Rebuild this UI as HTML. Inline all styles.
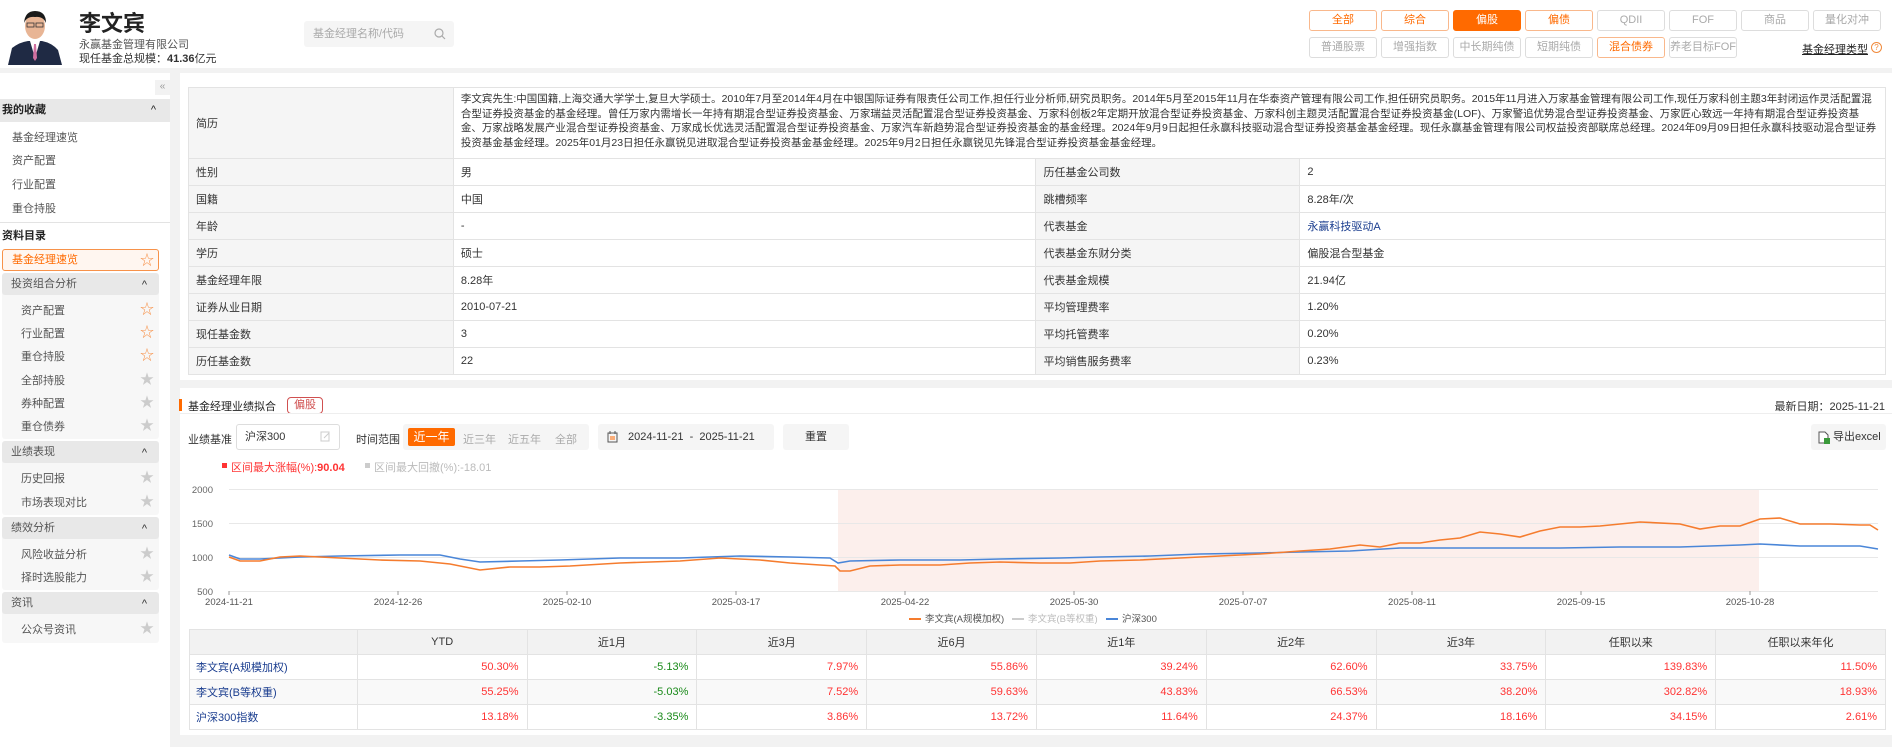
<!DOCTYPE html>
<html><head><meta charset="utf-8">
<style>
*{box-sizing:border-box;margin:0;padding:0}
body{width:1892px;height:747px;overflow:hidden;background:#fff;font-family:"Liberation Sans","Noto Sans CJK SC",sans-serif;color:#333;font-size:12px;position:relative}
.a{position:absolute;white-space:nowrap}
.btn{position:absolute;width:68px;height:21px;border:1px solid #ddd;border-radius:3px;color:#aaa;font-size:11px;text-align:center;line-height:19px;background:#fff;white-space:nowrap}
.btn.o{border-color:#f9b88c;color:#ff6a00}
.btn.f{background:#ff6a00;border-color:#ff6a00;color:#fff}
.sb-item{position:absolute;left:12px;font-size:11px;color:#555}
.sub{position:absolute;left:21px;font-size:11px;color:#555}
.star{position:absolute;left:140px;font-size:14px;color:#ccc;line-height:14px}
.star.o{color:#f7924a}
.gh{position:absolute;left:2px;width:157px;height:22px;background:#e8e8e8;border-radius:3px;font-size:11px;color:#555;line-height:22px;padding-left:9px}
.gh:after{content:"^";position:absolute;right:12px;top:1px;font-size:11px;color:#333}
.panel{position:absolute;left:2px;width:157px;background:#f7f7f7;border-radius:3px}
table{border-collapse:collapse;position:absolute}
td{border:1px solid #e3e3e3;font-size:11px;padding:0 7px}
.t1 td{height:27px}
.t1 td.l{background:#f5f5f5}
.t2 td{height:25px;text-align:right;padding-right:8px}
.t2 tr.h td{background:#f2f2f2;text-align:center;padding:0;color:#333}
.t2 td.n{text-align:left;color:#1a3d8f;padding-left:6px}
.r{color:#f33}.g{color:#1a8a1a}
</style></head><body>

<!-- header -->
<svg class="a" style="left:8px;top:8px" width="54" height="57" viewBox="0 0 54 57">
<rect width="54" height="57" fill="#fff"/>
<path d="M0 57 L4 40 Q12 34 20 33 L34 33 Q44 35 50 42 L54 57Z" fill="#1f2a44"/>
<path d="M22 33 L27 50 L32 33Z" fill="#fff"/>
<path d="M26 36 L28 36 L29 50 L27 53 L25 50Z" fill="#d070a0"/>
<ellipse cx="27" cy="18" rx="10" ry="13" fill="#e8b595"/>
<path d="M16 15 Q17 3 27 3 Q38 3 38 15 Q35 8 27 9 Q19 8 16 15Z" fill="#1a1a1a"/>
<rect x="19" y="15" width="7" height="4" fill="none" stroke="#333" stroke-width="0.8"/>
<rect x="28" y="15" width="7" height="4" fill="none" stroke="#333" stroke-width="0.8"/>
</svg>
<div class="a" style="left:79px;top:6px;font-size:22px;font-weight:bold;color:#222">李文宾</div>
<div class="a" style="left:79px;top:36px;font-size:11px;color:#555">永赢基金管理有限公司</div>
<div class="a" style="left:79px;top:50px;font-size:11px;color:#333">现任基金总规模：<b>41.36</b>亿元</div>
<div class="a" style="left:304px;top:21px;width:150px;height:26px;background:#f5f5f5;border-radius:3px;font-size:11px;color:#aaa;line-height:26px;padding-left:9px">基金经理名称/代码
<svg class="a" style="right:8px;top:7px" width="12" height="12"><circle cx="5" cy="5" r="4" fill="none" stroke="#aaa" stroke-width="1.2"/><path d="M8 8 L11 11" stroke="#aaa" stroke-width="1.2"/></svg></div>

<div class="btn o" style="left:1309px;top:10px">全部</div>
<div class="btn o" style="left:1381px;top:10px">综合</div>
<div class="btn f" style="left:1453px;top:10px">偏股</div>
<div class="btn o" style="left:1525px;top:10px">偏债</div>
<div class="btn" style="left:1597px;top:10px">QDII</div>
<div class="btn" style="left:1669px;top:10px">FOF</div>
<div class="btn" style="left:1741px;top:10px">商品</div>
<div class="btn" style="left:1813px;top:10px">量化对冲</div>
<div class="btn" style="left:1309px;top:37px">普通股票</div>
<div class="btn" style="left:1381px;top:37px">增强指数</div>
<div class="btn" style="left:1453px;top:37px">中长期纯债</div>
<div class="btn" style="left:1525px;top:37px">短期纯债</div>
<div class="btn o" style="left:1597px;top:37px">混合债券</div>
<div class="btn" style="left:1669px;top:37px">养老目标FOF</div>
<div class="a" style="left:1802px;top:41px;font-size:11px;color:#222;text-decoration:underline">基金经理类型</div>
<div class="a" style="left:1871px;top:42px;width:11px;height:11px;border:1px solid #f08a3c;border-radius:50%;font-size:8px;color:#f08a3c;text-align:center;line-height:9px">?</div>

<div class="a" style="left:0;top:68px;width:1892px;height:5px;background:#f2f2f2"></div>

<!-- sidebar -->
<div class="a" style="left:170px;top:73px;width:10px;height:674px;background:#f2f2f2"></div>
<div class="a" style="left:155px;top:80px;width:15px;height:15px;background:#f2f2f2;font-size:10px;color:#999;text-align:center;line-height:14px">«</div>
<div class="a" style="left:0;top:99px;width:170px;height:23px;background:#e8e8e8;font-size:11px;font-weight:bold;color:#222;line-height:23px;padding-left:2px">我的收藏<span style="position:absolute;right:14px;font-weight:normal">^</span></div>
<div class="sb-item" style="top:129px">基金经理速览</div>
<div class="sb-item" style="top:152px">资产配置</div>
<div class="sb-item" style="top:176px">行业配置</div>
<div class="sb-item" style="top:200px">重仓持股</div>
<div class="a" style="left:0;top:222px;width:170px;height:1px;background:#e3e3e3"></div>
<div class="a" style="left:2px;top:227px;font-size:11px;font-weight:bold;color:#222">资料目录</div>
<div class="a" style="left:2px;top:249px;width:157px;height:22px;border:1px solid #f7924a;border-radius:3px;background:#fff6f0;color:#ff6a00;font-size:11px;line-height:20px;padding-left:9px">基金经理速览</div>
<div class="star o" style="top:253px">☆</div>

<div class="panel" style="top:273px;height:166px"></div>
<div class="gh" style="top:273px">投资组合分析</div>
<div class="sub" style="top:302px">资产配置</div><div class="star o" style="top:302px">☆</div>
<div class="sub" style="top:325px">行业配置</div><div class="star o" style="top:325px">☆</div>
<div class="sub" style="top:348px">重仓持股</div><div class="star o" style="top:348px">☆</div>
<div class="sub" style="top:372px">全部持股</div><div class="star" style="top:372px">★</div>
<div class="sub" style="top:395px">券种配置</div><div class="star" style="top:395px">★</div>
<div class="sub" style="top:418px">重仓债券</div><div class="star" style="top:418px">★</div>

<div class="panel" style="top:441px;height:74px"></div>
<div class="gh" style="top:441px">业绩表现</div>
<div class="sub" style="top:470px">历史回报</div><div class="star" style="top:470px">★</div>
<div class="sub" style="top:494px">市场表现对比</div><div class="star" style="top:494px">★</div>

<div class="panel" style="top:517px;height:73px"></div>
<div class="gh" style="top:517px">绩效分析</div>
<div class="sub" style="top:546px">风险收益分析</div><div class="star" style="top:546px">★</div>
<div class="sub" style="top:569px">择时选股能力</div><div class="star" style="top:569px">★</div>

<div class="panel" style="top:592px;height:51px"></div>
<div class="gh" style="top:592px">资讯</div>
<div class="sub" style="top:621px">公众号资讯</div><div class="star" style="top:621px">★</div>

<!-- info table -->
<table class="t1" style="left:188px;top:87px;width:1698px">
<colgroup><col style="width:265px"><col style="width:583px"><col style="width:264px"><col style="width:586px"></colgroup>
<tr><td class="l" style="height:71px">简历</td><td colspan="3" style="line-height:14.5px;font-size:10.5px;padding:4px 7px 5px;vertical-align:top">李文宾先生:中国国籍,上海交通大学学士,复旦大学硕士。2010年7月至2014年4月在中银国际证券有限责任公司工作,担任行业分析师,研究员职务。2014年5月至2015年11月在华泰资产管理有限公司工作,担任研究员职务。2015年11月进入万家基金管理有限公司工作,现任万家科创主题3年封闭运作灵活配置混合型证券投资基金的基金经理。曾任万家内需增长一年持有期混合型证券投资基金、万家瑞益灵活配置混合型证券投资基金、万家科创板2年定期开放混合型证券投资基金、万家科创主题灵活配置混合型证券投资基金(LOF)、万家警追优势混合型证券投资基金、万家匠心致远一年持有期混合型证券投资基金、万家战略发展产业混合型证券投资基金、万家成长优选灵活配置混合型证券投资基金、万家汽车新趋势混合型证券投资基金的基金经理。2024年9月9日起担任永赢科技驱动混合型证券投资基金基金经理。现任永赢基金管理有限公司权益投资部联席总经理。2024年09月09日担任永赢科技驱动混合型证券投资基金基金经理。2025年01月23日担任永赢锐见进取混合型证券投资基金基金经理。2025年9月2日担任永赢锐见先锋混合型证券投资基金基金经理。</td></tr>
<tr><td class="l">性别</td><td>男</td><td class="l">历任基金公司数</td><td>2</td></tr>
<tr><td class="l">国籍</td><td>中国</td><td class="l">跳槽频率</td><td>8.28年/次</td></tr>
<tr><td class="l">年龄</td><td>-</td><td class="l">代表基金</td><td style="color:#1a3d8f">永赢科技驱动A</td></tr>
<tr><td class="l">学历</td><td>硕士</td><td class="l">代表基金东财分类</td><td>偏股混合型基金</td></tr>
<tr><td class="l">基金经理年限</td><td>8.28年</td><td class="l">代表基金规模</td><td>21.94亿</td></tr>
<tr><td class="l">证券从业日期</td><td>2010-07-21</td><td class="l">平均管理费率</td><td>1.20%</td></tr>
<tr><td class="l">现任基金数</td><td>3</td><td class="l">平均托管费率</td><td>0.20%</td></tr>
<tr><td class="l">历任基金数</td><td>22</td><td class="l">平均销售服务费率</td><td>0.23%</td></tr>
</table>

<div class="a" style="left:180px;top:380px;width:1712px;height:8px;background:#f2f2f2"></div>

<!-- chart section -->
<div class="a" style="left:179px;top:399px;width:3px;height:12px;background:#ff6a00"></div>
<div class="a" style="left:188px;top:398px;font-size:11px;color:#222">基金经理业绩拟合</div>
<div class="a" style="left:287px;top:397px;width:36px;height:17px;border:1px solid #d05050;border-radius:4px;color:#d05050;font-size:11px;text-align:center;line-height:15px">偏股</div>
<div class="a" style="right:7px;top:398px;font-size:11px;color:#333">最新日期：2025-11-21</div>
<div class="a" style="left:180px;top:413px;width:1712px;height:1px;background:#eee"></div>

<div class="a" style="left:188px;top:431px;font-size:11px;color:#333">业绩基准</div>
<div class="a" style="left:236px;top:424px;width:104px;height:26px;border:1px solid #ddd;border-radius:3px;font-size:11px;line-height:24px;padding-left:8px">沪深300
<svg class="a" style="right:8px;top:6px" width="11" height="11"><rect x="1" y="1" width="8" height="9" fill="none" stroke="#ccc"/><path d="M4 7 L9 2" stroke="#ccc"/></svg></div>
<div class="a" style="left:356px;top:431px;font-size:11px;color:#333">时间范围</div>
<div class="a" style="left:403px;top:424px;width:186px;height:26px;background:#f5f5f5;border-radius:3px"></div>
<div class="a" style="left:408px;top:428px;width:47px;height:18px;background:#ff6a00;border-radius:2px;color:#fff;font-size:12px;text-align:center;line-height:18px">近一年</div>
<div class="a" style="left:463px;top:431px;font-size:11px;color:#aaa">近三年</div>
<div class="a" style="left:508px;top:431px;font-size:11px;color:#aaa">近五年</div>
<div class="a" style="left:555px;top:431px;font-size:11px;color:#aaa">全部</div>
<div class="a" style="left:598px;top:424px;width:176px;height:26px;background:#f5f5f5;border-radius:3px;font-size:11px;line-height:26px;padding-left:30px">2024-11-21 &nbsp;- &nbsp;2025-11-21
<svg class="a" style="left:9px;top:7px" width="11" height="12"><rect x="1" y="2" width="9" height="9" fill="none" stroke="#555"/><path d="M3 0 V3 M8 0 V3" stroke="#555"/><path d="M3 6 H8 M3 8 H8" stroke="#f60"/></svg></div>
<div class="a" style="left:783px;top:424px;width:66px;height:26px;background:#f5f5f5;border-radius:3px;font-size:11px;text-align:center;line-height:26px">重置</div>
<div class="a" style="left:1811px;top:424px;width:75px;height:26px;background:#f5f5f5;border-radius:3px;font-size:11px;line-height:26px;padding-left:22px">导出excel
<svg class="a" style="left:7px;top:7px" width="13" height="13"><path d="M1 1 H7 L10 4 V12 H1Z" fill="#fff" stroke="#555"/><rect x="6" y="7" width="6" height="6" fill="#3a9a3a"/></svg></div>

<div class="a" style="left:222px;top:463px;width:5px;height:5px;background:#f33"></div>
<div class="a" style="left:231px;top:459px;font-size:11px;color:#f33">区间最大涨幅(%):<b>90.04</b></div>
<div class="a" style="left:365px;top:463px;width:5px;height:5px;background:#ccc"></div>
<div class="a" style="left:374px;top:459px;font-size:11px;color:#bbb">区间最大回撤(%):-18.01</div>

<svg class="a" style="left:180px;top:480px" width="1712" height="150" viewBox="180 480 1712 150" font-family="Liberation Sans, sans-serif">
<rect x="838" y="489" width="921" height="102" fill="#fcefec"/>
<g stroke="#e8e8e8" stroke-width="1"><path d="M229 489.5H1878M229 523.5H1878M229 557.5H1878M229 591.5H1878"/></g>
<g fill="#666" font-size="9.5" text-anchor="end"><text x="213" y="493">2000</text><text x="213" y="527">1500</text><text x="213" y="561">1000</text><text x="213" y="595">500</text></g>
<g stroke="#999"><path d="M229 591v4M398 591v4M567 591v4M736 591v4M905 591v4M1074 591v4M1243 591v4M1412 591v4M1581 591v4M1750 591v4"/></g>
<g fill="#555" font-size="9.5" text-anchor="middle"><text x="229" y="605">2024-11-21</text><text x="398" y="605">2024-12-26</text><text x="567" y="605">2025-02-10</text><text x="736" y="605">2025-03-17</text><text x="905" y="605">2025-04-22</text><text x="1074" y="605">2025-05-30</text><text x="1243" y="605">2025-07-07</text><text x="1412" y="605">2025-08-11</text><text x="1581" y="605">2025-09-15</text><text x="1750" y="605">2025-10-28</text></g>
<polyline fill="none" stroke="#4a86d8" stroke-width="1.6" points="229,555 240,559 260,559 300,557 340,556 400,555 440,555 460,559 480,562 520,561 560,560 620,558 680,558 740,556 790,557 830,558 838,563 850,561 900,560 960,560 1000,559 1060,558 1100,557 1150,556 1200,554 1260,553 1300,552 1350,551 1400,548 1450,548 1500,548 1560,548 1620,547 1680,547 1740,545 1760,544 1800,546 1860,546 1878,549"/>
<polyline fill="none" stroke="#f57c2e" stroke-width="1.6" points="229,557 240,561 260,561 280,557 300,556 340,558 380,560 420,561 450,564 480,570 510,567 540,567 570,566 620,563 680,561 720,558 760,560 790,563 820,565 835,566 840,571 850,571 870,566 900,565 940,565 970,563 1000,562 1040,563 1070,563 1100,561 1140,560 1180,558 1220,556 1260,554 1300,551 1330,549 1360,545 1380,547 1400,543 1420,543 1440,540 1460,538 1480,532 1500,534 1520,537 1540,531 1560,527 1580,527 1600,526 1640,522 1680,524 1700,529 1720,526 1740,526 1760,519 1780,518 1800,524 1830,524 1860,525 1870,525 1878,530"/>
<g font-size="9.5" fill="#555"><path d="M909 619H921" stroke="#f57c2e" stroke-width="2"/><text x="925" y="622">李文宾(A规模加权)</text>
<path d="M1012 619H1024" stroke="#ccc" stroke-width="2"/><text x="1028" y="622" fill="#bbb">李文宾(B等权重)</text>
<path d="M1106 619H1118" stroke="#4a86d8" stroke-width="2"/><text x="1122" y="622">沪深300</text></g>
</svg>

<table class="t2" style="left:189px;top:629px;width:1697px">
<colgroup><col style="width:168px"><col span="9" style="width:170px"></colgroup>
<tr class="h"><td></td><td>YTD</td><td>近1月</td><td>近3月</td><td>近6月</td><td>近1年</td><td>近2年</td><td>近3年</td><td>任职以来</td><td>任职以来年化</td></tr>
<tr><td class="n">李文宾(A规模加权)</td><td class="r">50.30%</td><td class="g">-5.13%</td><td class="r">7.97%</td><td class="r">55.86%</td><td class="r">39.24%</td><td class="r">62.60%</td><td class="r">33.75%</td><td class="r">139.83%</td><td class="r">11.50%</td></tr>
<tr style="background:#f9f9f9"><td class="n">李文宾(B等权重)</td><td class="r">55.25%</td><td class="g">-5.03%</td><td class="r">7.52%</td><td class="r">59.63%</td><td class="r">43.83%</td><td class="r">66.53%</td><td class="r">38.20%</td><td class="r">302.82%</td><td class="r">18.93%</td></tr>
<tr><td class="n">沪深300指数</td><td class="r">13.18%</td><td class="g">-3.35%</td><td class="r">3.86%</td><td class="r">13.72%</td><td class="r">11.64%</td><td class="r">24.37%</td><td class="r">18.16%</td><td class="r">34.15%</td><td class="r">2.61%</td></tr>
</table>
<div class="a" style="left:180px;top:735px;width:1712px;height:12px;background:#f2f2f2"></div>
</body></html>
